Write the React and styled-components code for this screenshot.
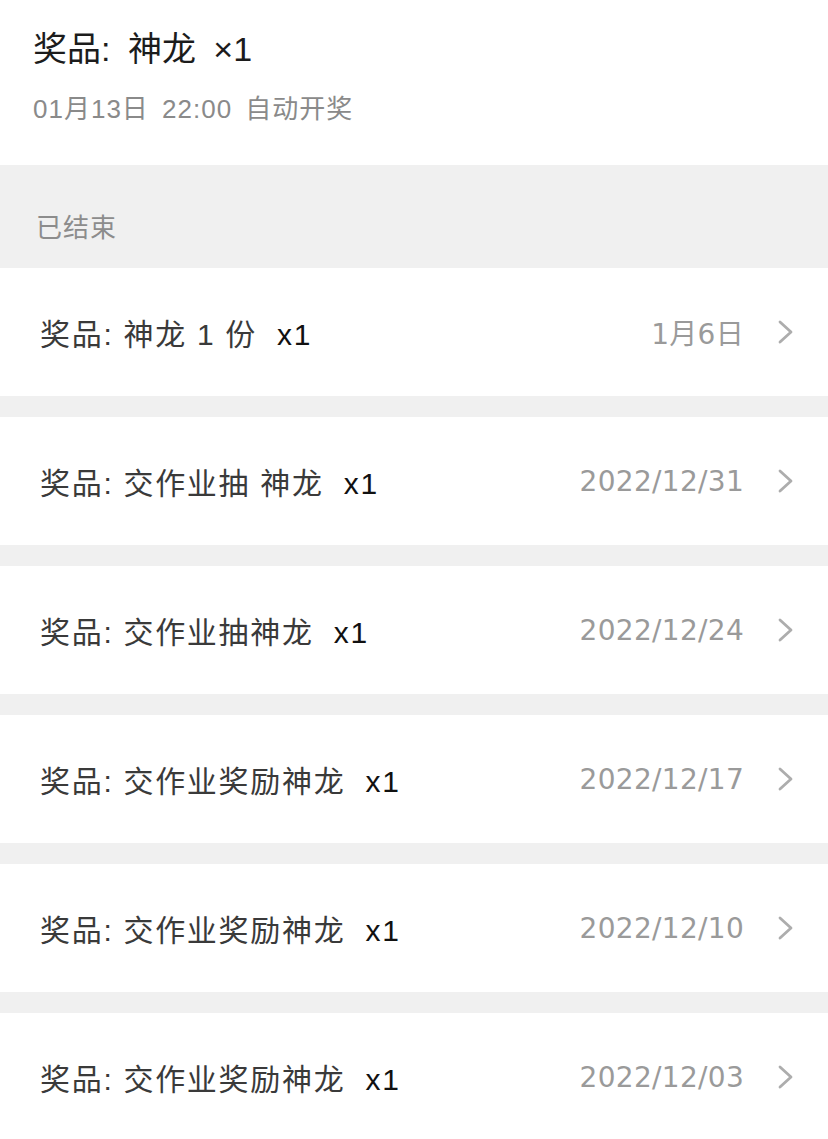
import React from 'react';
import styled, { createGlobalStyle } from 'styled-components';

const GlobalStyle = createGlobalStyle`
    html, body {
        margin: 0;
        padding: 0;
        background: #f0f0f0;
        font-family: "Liberation Sans", "Noto Sans CJK SC", sans-serif;
    }
`;

const Page = styled.div`
    width: 828px;
    min-height: 1139px;
    background: #f0f0f0;
`;

const Header = styled.div`
    background: #ffffff;
    height: 165px;
    padding: 26px 0 0 33px;
    box-sizing: border-box;
`;

const Title = styled.div`
    font-size: 34px;
    line-height: 46px;
    color: #1c1c1c;
    word-spacing: 8px;
    white-space: pre;
`;

const Sub = styled.div`
    margin-top: 20px;
    font-size: 26px;
    line-height: 34px;
    letter-spacing: 1px;
    word-spacing: 5px;
    color: #8a8a8a;
`;

const SectionLabel = styled.div`
    height: 103px;
    box-sizing: border-box;
    padding: 45px 0 0 36px;
    font-size: 26px;
    line-height: 36px;
    letter-spacing: 1px;
    color: #8c8c8c;
`;

const List = styled.div`
    display: flex;
    flex-direction: column;
    gap: 21px;
`;

const Row = styled.div`
    height: 128px;
    background: #ffffff;
    display: flex;
    align-items: center;
    padding: 0 33px 0 40px;
    box-sizing: border-box;
`;

const Name = styled.div`
    flex: 1;
    font-size: 30px;
    letter-spacing: 1.7px;
    color: #3a3a3a;
    white-space: pre;
`;

const Count = styled.span`
    color: #111111;
`;

const Date = styled.div`
    font-family: "DejaVu Sans", "Noto Sans CJK SC", sans-serif;
    font-size: 28px;
    letter-spacing: 0.3px;
    color: #9a9a9a;
    margin-right: 33px;
`;

const Chevron = () => (
    <svg width="18" height="24" viewBox="0 0 18 24">
        <path d="M3 2 L14 12 L3 22" fill="none" stroke="#adadad" strokeWidth="2.8" strokeLinecap="round" strokeLinejoin="round" />
    </svg>
);

const items = [
    { name: '奖品: 神龙 1 份  ', date: '1月6日' },
    { name: '奖品: 交作业抽 神龙  ', date: '2022/12/31' },
    { name: '奖品: 交作业抽神龙  ', date: '2022/12/24' },
    { name: '奖品: 交作业奖励神龙  ', date: '2022/12/17' },
    { name: '奖品: 交作业奖励神龙  ', date: '2022/12/10' },
    { name: '奖品: 交作业奖励神龙  ', date: '2022/12/03' },
];

export default function App() {
    return (
        <Page>
            <GlobalStyle />
            <Header>
                <Title>奖品: 神龙 ×1</Title>
                <Sub>01月13日 22:00 自动开奖</Sub>
            </Header>
            <SectionLabel>已结束</SectionLabel>
            <List>
                {items.map((it, i) => (
                    <Row key={i}>
                        <Name>{it.name}<Count>x1</Count></Name>
                        <Date>{it.date}</Date>
                        <Chevron />
                    </Row>
                ))}
            </List>
        </Page>
    );
}
